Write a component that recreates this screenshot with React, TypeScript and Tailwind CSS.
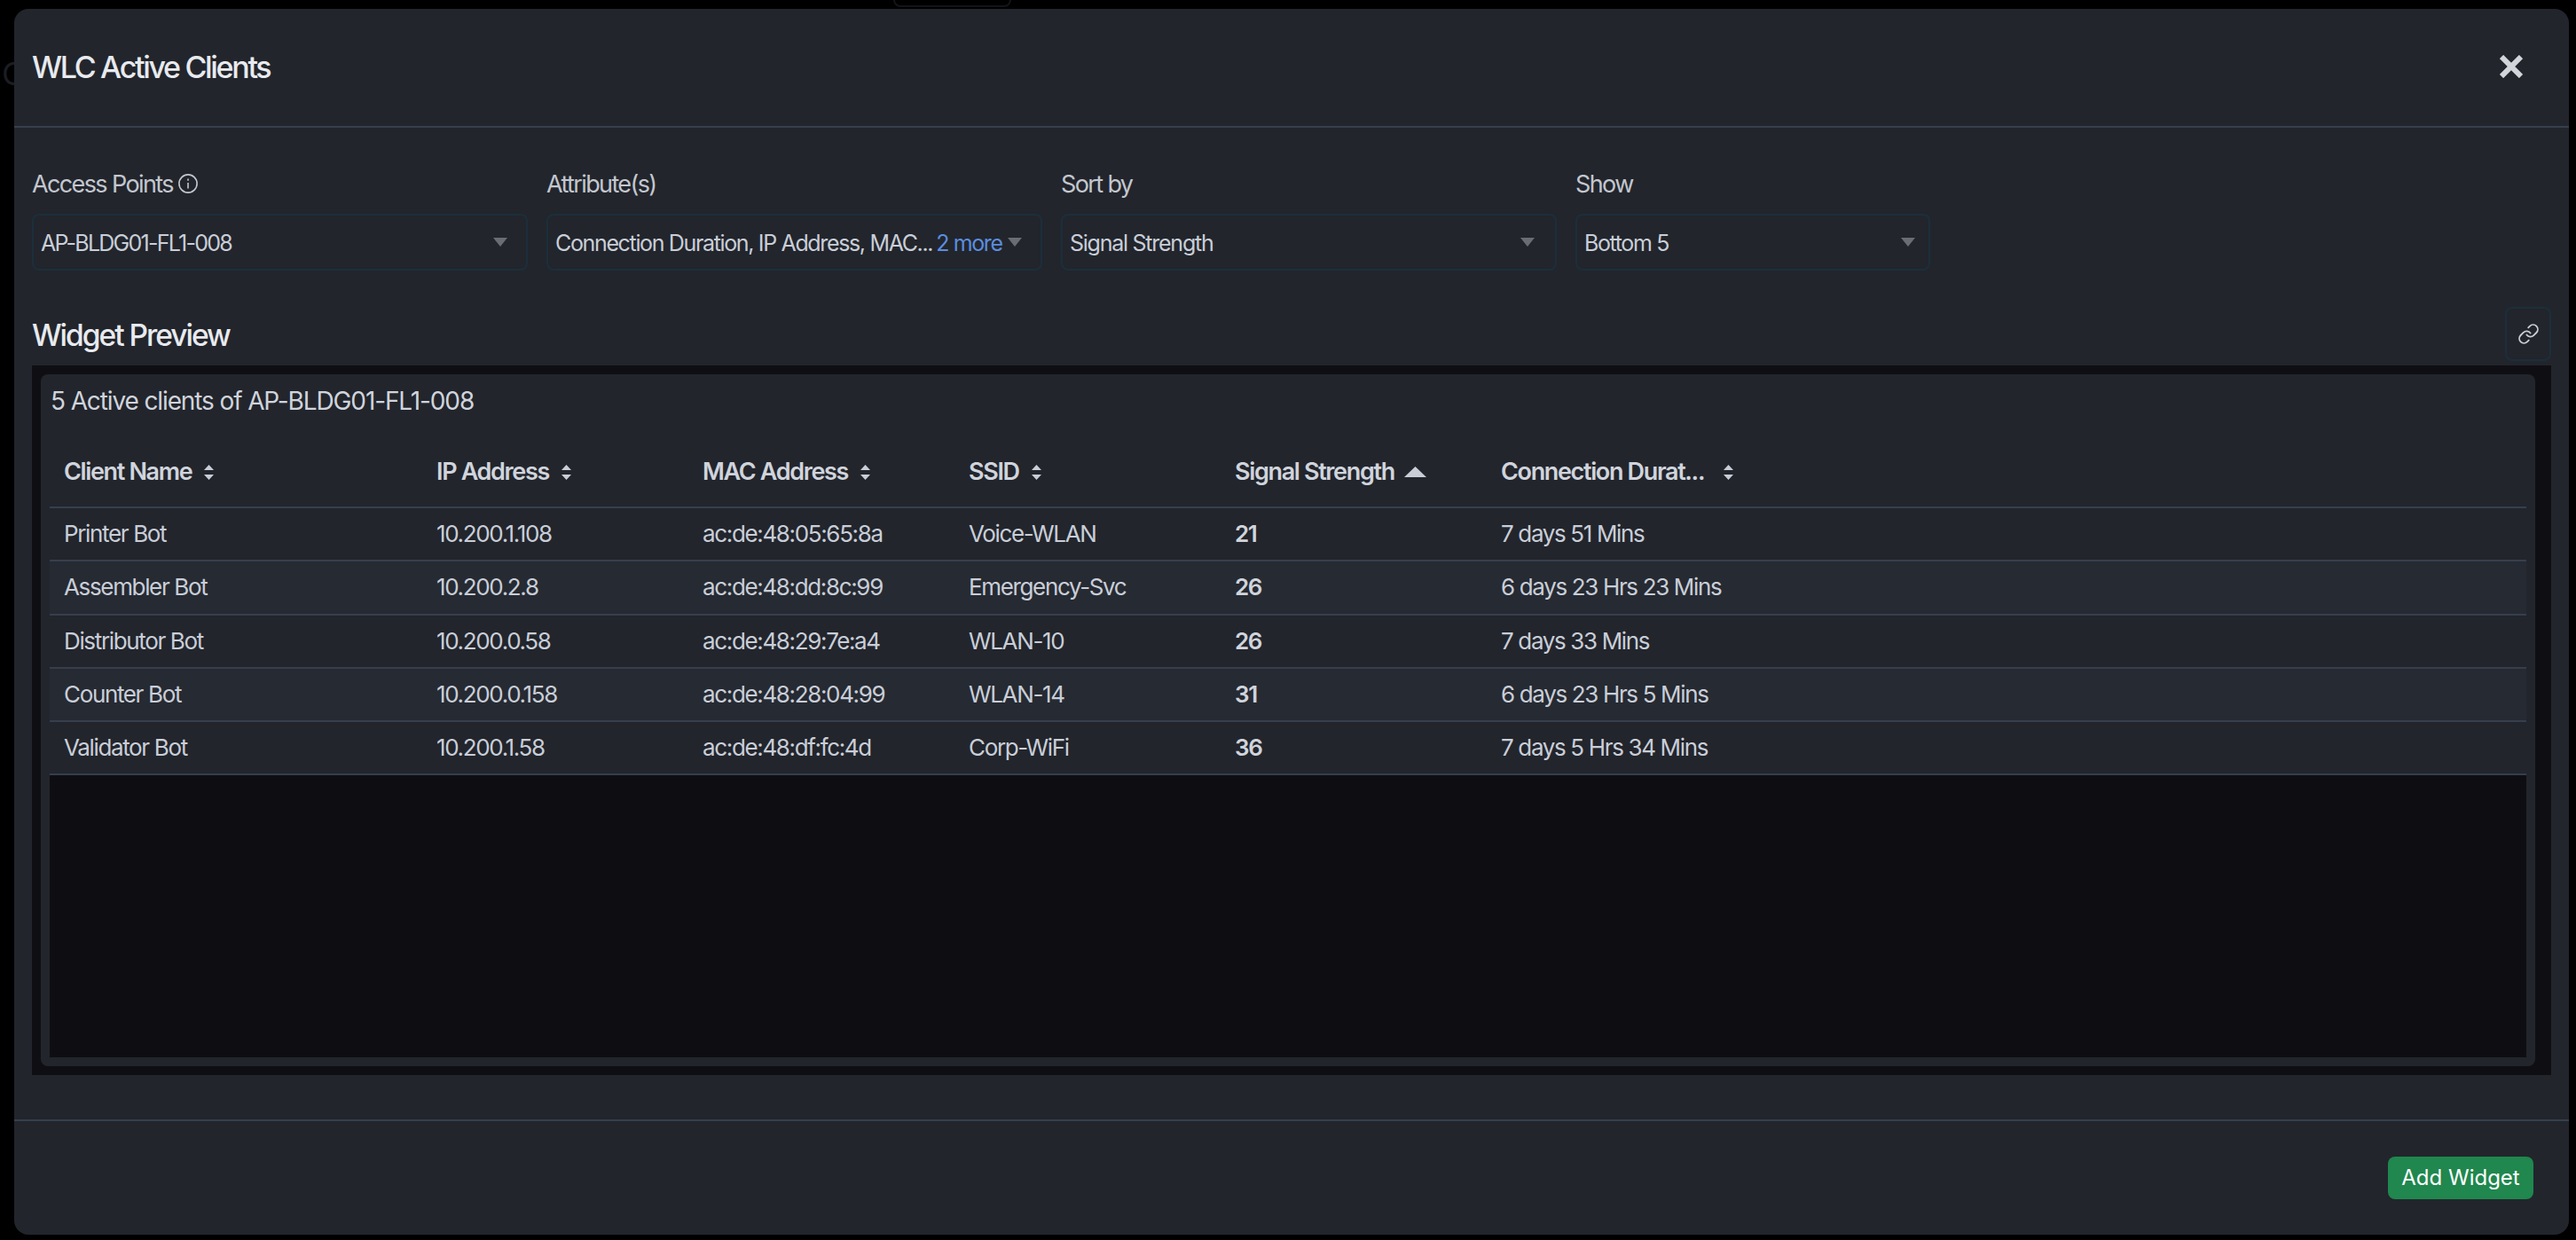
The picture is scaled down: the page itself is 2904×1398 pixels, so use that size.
import { Link } from "lucide-react";

const font = { fontFamily: "Inter, 'Liberation Sans', sans-serif" };

function Caret() {
  return (
    <svg width="16" height="10" viewBox="0 0 16 10" className="shrink-0">
      <path d="M0 0H16L8 10Z" fill="#6a6d74" />
    </svg>
  );
}

function SortIcon() {
  return (
    <svg width="11" height="17" viewBox="0 0 11 17">
      <path d="M5.5 0L11 6H0Z M0 11H11L5.5 17Z" fill="#c9cdd6" />
    </svg>
  );
}

function Field({ label, value, width, pad, track, info, more }: { label: string; value: string; width: string; pad: string; track: string; info?: boolean; more?: boolean }) {
  return (
    <div className={`flex flex-col ${width}`}>
      <div className="flex h-[30px] items-center gap-[6px] text-[27px] tracking-[-0.06em] text-[#c3c7cf]">
        {label}
        {info && (
          <svg width="22" height="22" viewBox="0 0 22 22" fill="none" stroke="#c3c7cf" strokeWidth="1.6" className="mb-[3px]">
            <circle cx="11" cy="11" r="10.1" />
            <path d="M11 10v6.5M11 5.5v2.2" />
          </svg>
        )}
      </div>
      <div className={`mt-[18px] flex h-[64px] items-center justify-between rounded-[8px] border-2 border-[#1c2e3b] pl-[8px] ${pad}`}>
        <span className={`flex items-center pt-[4px] text-[25px] ${track} text-[#c9ced8]`}>
          {value}
          {more && <span className="ml-[4px] tracking-[-0.055em] text-[#5b8ddf]">2 more</span>}
        </span>
        <Caret />
      </div>
    </div>
  );
}

const columns = [
  { name: "Client Name", w: "w-[420px]", gap: "gap-[14px]", key: "a" },
  { name: "IP Address", w: "w-[300px]", gap: "gap-[14px]", key: "b" },
  { name: "MAC Address", w: "w-[300px]", gap: "gap-[14px]", key: "c" },
  { name: "SSID", w: "w-[300px]", gap: "gap-[14px]", key: "d" },
  { name: "Signal Strength", w: "w-[300px]", gap: "gap-[11px]", key: "e" },
  { name: "Connection Durat...", w: "w-[300px]", gap: "gap-[22px]", key: "f" },
];

const rows = [
  ["Printer Bot", "10.200.1.108", "ac:de:48:05:65:8a", "Voice-WLAN", "21", "7 days 51 Mins"],
  ["Assembler Bot", "10.200.2.8", "ac:de:48:dd:8c:99", "Emergency-Svc", "26", "6 days 23 Hrs 23 Mins"],
  ["Distributor Bot", "10.200.0.58", "ac:de:48:29:7e:a4", "WLAN-10", "26", "7 days 33 Mins"],
  ["Counter Bot", "10.200.0.158", "ac:de:48:28:04:99", "WLAN-14", "31", "6 days 23 Hrs 5 Mins"],
  ["Validator Bot", "10.200.1.58", "ac:de:48:df:fc:4d", "Corp-WiFi", "36", "7 days 5 Hrs 34 Mins"],
];

export default function App() {
  return (
    <div className="relative h-[1398px] w-[2904px] overflow-hidden bg-black pl-[16px] pt-[10px]" style={font}>
      <span className="absolute left-[2px] top-[56px] text-[36px] text-[#1b1d22]">C</span>
      <div className="absolute left-[1007px] top-[-20px] h-[28px] w-[133px] rounded-[8px] border-2 border-[#131418]" />
      <div className="relative flex h-[1382px] w-[2880px] flex-col rounded-[16px] bg-[#22252c]">
        <header className="flex h-[134px] shrink-0 items-center justify-between border-b-2 border-[#363f4c] pl-[20px] pr-[52px]">
          <h1 className="pb-[1px] text-[34px] font-medium tracking-[-0.068em] text-[#e8eaee]">WLC Active Clients</h1>
          <svg width="26" height="26" viewBox="0 0 26 26" stroke="#d2d5da" strokeWidth="6" className="mb-[2px]">
            <path d="M2 2L24 24M24 2L2 24" />
          </svg>
        </header>

        <div className="flex min-h-0 flex-1 flex-col px-[20px]">
          <div className="mt-[49px] flex gap-[21px]">
            <Field label="Access Points" value="AP-BLDG01-FL1-008" width="w-[559px]" pad="pr-[21px]" track="tracking-[-0.07em]" info />
            <Field label="Attribute(s)" value="Connection Duration, IP Address, MAC..." width="w-[559px]" pad="pr-[21px]" track="tracking-[-0.054em]" more />
            <Field label="Sort by" value="Signal Strength" width="w-[559px]" pad="pr-[23px]" track="tracking-[-0.05em]" />
            <Field label="Show" value="Bottom 5" width="w-[400px]" pad="pr-[15px]" track="tracking-[-0.055em]" />
          </div>

          <div className="mt-[41px] flex h-[61px] items-center justify-between">
            <h2 className="pt-[4px] text-[33.5px] font-medium tracking-[-0.06em] text-[#e8eaee]">Widget Preview</h2>
            <button className="flex h-[61px] w-[52px] items-center justify-center rounded-[8px] border-2 border-[#1c2e3b] text-[#c9cdd6]">
              <Link size={25} strokeWidth={1.8} />
            </button>
          </div>

          <div className="mt-[5px] flex h-[800px] flex-col bg-[#0f0f13] py-[10px] pl-[10px] pr-[18px]">
            <div className="flex min-h-0 flex-1 flex-col rounded-[8px] bg-[#22252c] px-[10px] pb-[10px]">
              <div className="flex h-[70px] shrink-0 items-start pl-[1px] pt-[9px] text-[28px] tracking-[-0.04em] text-[#d0d4dc]">
                5 Active clients of AP-BLDG01-FL1-008
              </div>
              <div className="flex h-[81px] shrink-0 items-center border-b-2 border-[#363f4c] pt-[1px]">
                {columns.map((c) => (
                  <div key={c.key} className={`flex ${c.w} items-center ${c.gap} pl-[16px] text-[27px] font-semibold tracking-[-0.05em] text-[#d0d4dc]`}>
                    {c.name}
                    {c.name === "Signal Strength" ? (
                      <svg width="25" height="12" viewBox="0 0 25 12">
                        <path d="M12.5 0L25 12H0Z" fill="#c9cdd6" />
                      </svg>
                    ) : (
                      <SortIcon />
                    )}
                  </div>
                ))}
              </div>
              {rows.map((r, i) => (
                <div key={r[0]} className={`flex h-[60.3px] shrink-0 items-center border-b-2 border-[#363f4c] pb-[1px] ${i % 2 === 1 ? "bg-[#262a32]" : ""}`}>
                  {r.map((cell, j) => (
                    <div key={j} className={`${columns[j].w} pl-[16px] text-[26px] tracking-[-0.052em] ${j === 4 ? "font-semibold text-[#d0d4dc]" : "text-[#c9ced8]"}`}>
                      {cell}
                    </div>
                  ))}
                </div>
              ))}
              <div className="min-h-0 flex-1 bg-[#0e0e12]" />
            </div>
          </div>
        </div>

        <footer className="flex h-[130px] shrink-0 items-start justify-end border-t-2 border-[#363f4c] pr-[40px] pt-[40px]">
          <button className="flex h-[48px] w-[164px] items-center justify-center rounded-[8px] bg-[#20874e] pb-[1px] text-[24px] font-normal text-white">
            Add Widget
          </button>
        </footer>
      </div>
    </div>
  );
}
